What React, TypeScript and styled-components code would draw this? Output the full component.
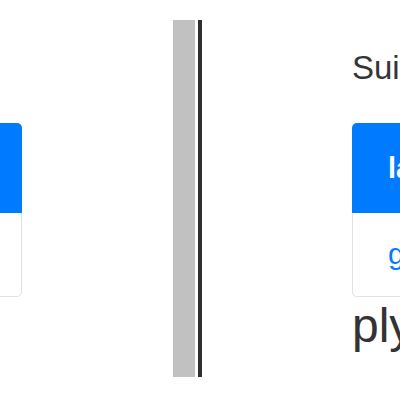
import styled, { createGlobalStyle } from "styled-components";

const GlobalStyle = createGlobalStyle`
  html, body {
    margin: 0;
    padding: 0;
    background: #fff;
  }
  body {
    font-family: "Liberation Sans", Arial, sans-serif;
    color: #333;
  }
`;

const Page = styled.div`
  width: 400px;
  height: 400px;
  display: flex;
  overflow: hidden;
`;

// the left pane is scrolled: only the right edge of its card shows
const LeftPane = styled.div`
  width: 324px;
  margin-left: -151px;
  flex-shrink: 0;
  display: flex;
  justify-content: flex-end;
  align-items: flex-start;
  padding: 123px 151px 0 0;
  box-sizing: border-box;
  overflow: hidden;
`;

const Splitter = styled.div`
  display: flex;
  gap: 3px;
  padding: 20px 0 23px;
  flex-shrink: 0;
`;

const Handle = styled.div`
  width: 22px;
  background: #c1c1c1;
`;

const Rule = styled.div`
  width: 4px;
  background: #2f2f2f;
`;

const RightPane = styled.div`
  flex: 1;
  min-width: 0;
  padding: 48px 0 0 150px;
  white-space: nowrap;
`;

const Title = styled.div`
  font-size: 33px;
  line-height: 39px;
  color: #353535;
  margin-bottom: 36px;
`;

const Card = styled.div<{ $width: number }>`
  width: ${(p) => p.$width}px;
  flex-shrink: 0;
  border: 1px solid #e2e2e2;
  border-radius: 5px;
  background: #fff;
  white-space: nowrap;
`;

const CardHeader = styled.div`
  margin: -1px -1px 0;
  height: 90px;
  line-height: 90px;
  padding-left: 36px;
  background: #007bff;
  color: #fff;
  font-size: 29px;
  font-weight: 700;
  border-radius: 5px 5px 0 0;
`;

const CardBody = styled.div`
  height: 83px;
  line-height: 81px;
  padding-left: 35px;
  font-size: 30px;
  color: #007bff;
`;

const Big = styled.div`
  font-size: 48px;
  line-height: 1.2;
  color: #333;
`;

export default function App() {
  return (
    <>
      <GlobalStyle />
      <Page>
        <LeftPane>
          <Card $width={220}>
            <CardHeader>label</CardHeader>
            <CardBody>go</CardBody>
          </Card>
        </LeftPane>
        <Splitter>
          <Handle />
          <Rule />
        </Splitter>
        <RightPane>
          <Title>Suivant</Title>
          <Card $width={220}>
            <CardHeader>label</CardHeader>
            <CardBody>go</CardBody>
          </Card>
          <Big>ply</Big>
        </RightPane>
      </Page>
    </>
  );
}
